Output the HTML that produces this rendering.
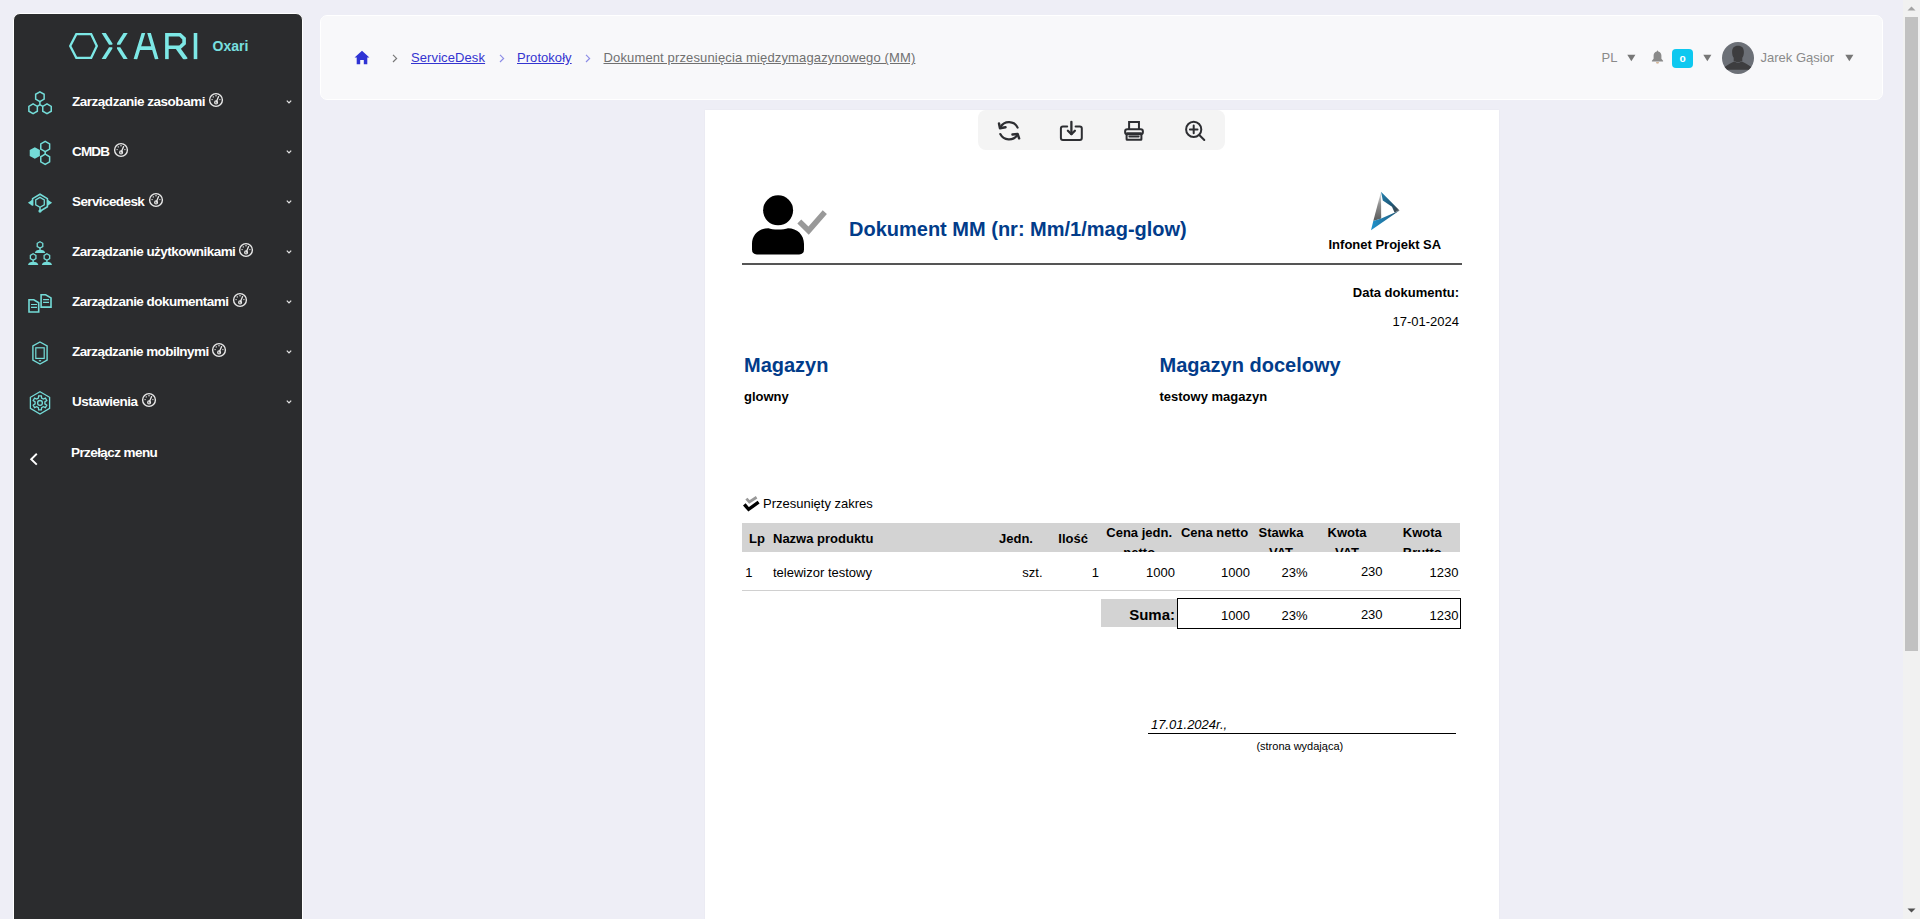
<!DOCTYPE html>
<html><head><meta charset="utf-8">
<style>
*{box-sizing:border-box;margin:0;padding:0}
html,body{width:1920px;height:919px;overflow:hidden}
body{background:#EEEEF6;font-family:"Liberation Sans",sans-serif;position:relative}
.abs{position:absolute}
.t{position:absolute;white-space:nowrap;color:#000}
#sidebar{position:absolute;left:13px;top:13px;width:290px;height:920px;background:#2B2C2E;border:1px solid #fff;border-radius:7px 7px 0 0}
#header{position:absolute;left:320px;top:15px;width:1563px;height:85px;background:#F8F8FA;border:1px solid #fff;border-radius:7px}
.mi{position:absolute;left:72px;color:#fff;font-weight:bold;font-size:13.5px;line-height:13.5px;letter-spacing:-0.55px;white-space:nowrap}
#page{position:absolute;left:705px;top:110px;width:794px;height:820px;background:#fff;box-shadow:0 0 2px rgba(0,0,0,0.04)}
#toolbar{position:absolute;left:978px;top:110px;width:247px;height:40px;background:#F4F4F4;border-radius:8px}
</style></head><body>
<div id="sidebar"></div>
<div id="header"></div>
<div id="page"></div>
<div id="toolbar"></div>

<svg class="abs" style="left:0;top:0" width="320" height="480" viewBox="0 0 320 480">
<g fill="none" stroke="#74DCD8" stroke-width="1.5" stroke-linejoin="miter">
<polygon points="39.90,91.80 44.14,94.25 44.14,99.15 39.90,101.60 35.66,99.15 35.66,94.25"/>
<polygon points="33.10,103.90 37.34,106.35 37.34,111.25 33.10,113.70 28.86,111.25 28.86,106.35"/>
<polygon points="47.00,103.90 51.24,106.35 51.24,111.25 47.00,113.70 42.76,111.25 42.76,106.35"/>
<path d="M39.9,101.6 V104.6 L37.34,106.35 M39.9,104.6 L42.76,106.35"/>
<polygon points="45.20,141.40 49.62,143.95 49.62,149.05 45.20,151.60 40.78,149.05 40.78,143.95"/>
<polygon points="45.20,154.20 49.62,156.75 49.62,161.85 45.20,164.40 40.78,161.85 40.78,156.75"/>
<path d="M45.2,151.6 V154.2"/>
<polygon points="40.00,197.35 44.29,199.83 44.29,204.78 40.00,207.25 35.71,204.78 35.71,199.83" stroke-width="1.3"/>
<path d="M32.6,205.6 V198.6 L40,194.2 L47.4,198.6 V206.8 L40,211.2" stroke-width="1.6"/>
<path d="M40,207.3 V210.5"/>
<polygon points="40.00,241.70 42.77,243.30 42.77,246.50 40.00,248.10 37.23,246.50 37.23,243.30" stroke-width="1.3"/>
<polygon points="33.15,253.80 35.92,255.40 35.92,258.60 33.15,260.20 30.38,258.60 30.38,255.40" stroke-width="1.3"/>
<polygon points="46.90,253.80 49.67,255.40 49.67,258.60 46.90,260.20 44.13,258.60 44.13,255.40" stroke-width="1.3"/>
<path d="M40,248.1 V250 M33.15,260.2 V262 M46.9,260.2 V262" stroke-width="1.3"/>
<path d="M29,312 V299.8 H33.8 L38.7,302.8 V312 Z" stroke-width="1.6"/>
<path d="M31,304.5 H37 M31,307.4 H37" stroke-width="1.2"/>
<path d="M41.1,307.1 V294.8 H45.6 L51,297.9 V307.1 Z" stroke-width="1.6"/>
<path d="M43.1,299.6 H49 M43.1,302.4 H49" stroke-width="1.2"/>
<polygon points="40,342 47.1,346 47.1,360 40,364 32.9,360 32.9,346" stroke-width="1.4"/>
<rect x="35.8" y="347.8" width="8.4" height="10.6" stroke-width="1.2"/>
<polygon points="40.00,391.75 49.61,397.30 49.61,408.40 40.00,413.95 30.39,408.40 30.39,397.30" stroke-width="1.3"/>
<path d="M38.37,398.17 L38.63,395.83 L41.37,395.83 L41.63,398.17 L43.28,399.13 L45.43,398.18 L46.81,400.56 L44.91,401.95 L44.91,403.85 L46.81,405.24 L45.43,407.62 L43.28,406.67 L41.63,407.63 L41.37,409.97 L38.63,409.97 L38.37,407.63 L36.72,406.67 L34.57,407.62 L33.19,405.24 L35.09,403.85 L35.09,401.95 L33.19,400.56 L34.57,398.18 L36.72,399.13 Z" stroke-width="1.3"/>
<circle cx="40" cy="402.9" r="2.4" stroke-width="1.3"/>
</g>
<g fill="#74DCD8">
<polygon points="34.80,147.15 39.87,150.07 39.87,155.93 34.80,158.85 29.73,155.93 29.73,150.07"/>
<path d="M32.6,199.6 L27.9,202.8 L32.6,206 Z M47.4,199.6 L52.1,202.8 L47.4,206 Z"/>
<circle cx="40" cy="211.1" r="1.6"/>
<path d="M34.8,253 Q35.5,249.8 40,249.8 Q44.5,249.8 45.2,253 Z"/>
<path d="M28,265 Q28.7,261.8 33.15,261.8 Q37.6,261.8 38.3,265 Z"/>
<path d="M41.8,265 Q42.5,261.8 46.9,261.8 Q51.3,261.8 52,265 Z"/>
<ellipse cx="40" cy="360.8" rx="1.3" ry="0.7"/>
</g>
<g fill="#7DE8E6">
<polygon points="70.2,46 76.3,34.15 91.2,34.15 96.8,46 91.2,57.85 76.3,57.85" fill="none" stroke="#7DE8E6" stroke-width="2.3"/>
<polygon points="101.6,33 105.8,33 112.3,43.2 112.3,44.7 109.05,44.7"/>
<polygon points="101.6,59 105.8,59 112.3,48.8 112.3,47.3 109.05,47.3"/>
<polygon points="127.7,33 123.5,33 117,43.2 117,44.7 120.25,44.7"/>
<polygon points="127.7,59 123.5,59 117,48.8 117,47.3 120.25,47.3"/>
</g>
<clipPath id="lc"><rect x="60" y="33" width="150" height="26.2"/></clipPath>
<g clip-path="url(#lc)" stroke="#7DE8E6" fill="none" stroke-width="3.5">
<path d="M135.3,59.5 L143.6,32.5 M148.9,32.5 L156.8,59.5"/>
<path d="M138,48.2 H154" stroke-width="3.8"/>
<path d="M166.9,59.5 V34.8 H180 L184.1,38.6 V43.4 L180,47.3 H166.9" stroke-width="3.6"/>
<path d="M177,47 L186,59.5" stroke-width="4.2"/>
<path d="M195.5,33 V59.5" stroke-width="3.6"/>
</g>
</svg>
<div class="t" style="left:212.60px;top:39.15px;font-size:14px;line-height:14px;font-weight:bold;color:#78E0E0">Oxari</div>
<div class="mi" style="top:95.07px;letter-spacing:-0.48px">Zarządzanie zasobami</div>
<svg class="abs" style="left:208.2px;top:92.0px" width="16" height="16" viewBox="0 0 16 16"><circle cx="8" cy="8" r="6.4" fill="none" stroke="#E8E8E8" stroke-width="1.4"/><path d="M8.2,10.3 L10.6,4.6" stroke="#E8E8E8" stroke-width="1.3" stroke-linecap="round"/><circle cx="8.1" cy="10.4" r="1.5" fill="none" stroke="#E8E8E8" stroke-width="1.1"/><circle cx="8" cy="3.7" r="0.75" fill="#E8E8E8"/><circle cx="5.3" cy="4.9" r="0.7" fill="#E8E8E8"/><circle cx="4.1" cy="7.6" r="0.7" fill="#E8E8E8"/><circle cx="11.9" cy="7.6" r="0.7" fill="#E8E8E8"/></svg>
<svg class="abs" style="left:285px;top:99.0px" width="8" height="6" viewBox="0 0 8 6"><path d="M1.8,1.6 L4,3.9 L6.2,1.6" fill="none" stroke="#E0E0E0" stroke-width="1.3"/></svg>
<div class="mi" style="top:145.07px;letter-spacing:-0.85px">CMDB</div>
<svg class="abs" style="left:112.6px;top:142.0px" width="16" height="16" viewBox="0 0 16 16"><circle cx="8" cy="8" r="6.4" fill="none" stroke="#E8E8E8" stroke-width="1.4"/><path d="M8.2,10.3 L10.6,4.6" stroke="#E8E8E8" stroke-width="1.3" stroke-linecap="round"/><circle cx="8.1" cy="10.4" r="1.5" fill="none" stroke="#E8E8E8" stroke-width="1.1"/><circle cx="8" cy="3.7" r="0.75" fill="#E8E8E8"/><circle cx="5.3" cy="4.9" r="0.7" fill="#E8E8E8"/><circle cx="4.1" cy="7.6" r="0.7" fill="#E8E8E8"/><circle cx="11.9" cy="7.6" r="0.7" fill="#E8E8E8"/></svg>
<svg class="abs" style="left:285px;top:149.0px" width="8" height="6" viewBox="0 0 8 6"><path d="M1.8,1.6 L4,3.9 L6.2,1.6" fill="none" stroke="#E0E0E0" stroke-width="1.3"/></svg>
<div class="mi" style="top:195.07px;letter-spacing:-0.6px">Servicedesk</div>
<svg class="abs" style="left:148.2px;top:192.0px" width="16" height="16" viewBox="0 0 16 16"><circle cx="8" cy="8" r="6.4" fill="none" stroke="#E8E8E8" stroke-width="1.4"/><path d="M8.2,10.3 L10.6,4.6" stroke="#E8E8E8" stroke-width="1.3" stroke-linecap="round"/><circle cx="8.1" cy="10.4" r="1.5" fill="none" stroke="#E8E8E8" stroke-width="1.1"/><circle cx="8" cy="3.7" r="0.75" fill="#E8E8E8"/><circle cx="5.3" cy="4.9" r="0.7" fill="#E8E8E8"/><circle cx="4.1" cy="7.6" r="0.7" fill="#E8E8E8"/><circle cx="11.9" cy="7.6" r="0.7" fill="#E8E8E8"/></svg>
<svg class="abs" style="left:285px;top:199.0px" width="8" height="6" viewBox="0 0 8 6"><path d="M1.8,1.6 L4,3.9 L6.2,1.6" fill="none" stroke="#E0E0E0" stroke-width="1.3"/></svg>
<div class="mi" style="top:245.07px;letter-spacing:-0.55px">Zarządzanie użytkownikami</div>
<svg class="abs" style="left:238.0px;top:242.0px" width="16" height="16" viewBox="0 0 16 16"><circle cx="8" cy="8" r="6.4" fill="none" stroke="#E8E8E8" stroke-width="1.4"/><path d="M8.2,10.3 L10.6,4.6" stroke="#E8E8E8" stroke-width="1.3" stroke-linecap="round"/><circle cx="8.1" cy="10.4" r="1.5" fill="none" stroke="#E8E8E8" stroke-width="1.1"/><circle cx="8" cy="3.7" r="0.75" fill="#E8E8E8"/><circle cx="5.3" cy="4.9" r="0.7" fill="#E8E8E8"/><circle cx="4.1" cy="7.6" r="0.7" fill="#E8E8E8"/><circle cx="11.9" cy="7.6" r="0.7" fill="#E8E8E8"/></svg>
<svg class="abs" style="left:285px;top:249.0px" width="8" height="6" viewBox="0 0 8 6"><path d="M1.8,1.6 L4,3.9 L6.2,1.6" fill="none" stroke="#E0E0E0" stroke-width="1.3"/></svg>
<div class="mi" style="top:295.07px;letter-spacing:-0.54px">Zarządzanie dokumentami</div>
<svg class="abs" style="left:231.7px;top:292.0px" width="16" height="16" viewBox="0 0 16 16"><circle cx="8" cy="8" r="6.4" fill="none" stroke="#E8E8E8" stroke-width="1.4"/><path d="M8.2,10.3 L10.6,4.6" stroke="#E8E8E8" stroke-width="1.3" stroke-linecap="round"/><circle cx="8.1" cy="10.4" r="1.5" fill="none" stroke="#E8E8E8" stroke-width="1.1"/><circle cx="8" cy="3.7" r="0.75" fill="#E8E8E8"/><circle cx="5.3" cy="4.9" r="0.7" fill="#E8E8E8"/><circle cx="4.1" cy="7.6" r="0.7" fill="#E8E8E8"/><circle cx="11.9" cy="7.6" r="0.7" fill="#E8E8E8"/></svg>
<svg class="abs" style="left:285px;top:299.0px" width="8" height="6" viewBox="0 0 8 6"><path d="M1.8,1.6 L4,3.9 L6.2,1.6" fill="none" stroke="#E0E0E0" stroke-width="1.3"/></svg>
<div class="mi" style="top:345.07px;letter-spacing:-0.57px">Zarządzanie mobilnymi</div>
<svg class="abs" style="left:211.4px;top:342.0px" width="16" height="16" viewBox="0 0 16 16"><circle cx="8" cy="8" r="6.4" fill="none" stroke="#E8E8E8" stroke-width="1.4"/><path d="M8.2,10.3 L10.6,4.6" stroke="#E8E8E8" stroke-width="1.3" stroke-linecap="round"/><circle cx="8.1" cy="10.4" r="1.5" fill="none" stroke="#E8E8E8" stroke-width="1.1"/><circle cx="8" cy="3.7" r="0.75" fill="#E8E8E8"/><circle cx="5.3" cy="4.9" r="0.7" fill="#E8E8E8"/><circle cx="4.1" cy="7.6" r="0.7" fill="#E8E8E8"/><circle cx="11.9" cy="7.6" r="0.7" fill="#E8E8E8"/></svg>
<svg class="abs" style="left:285px;top:349.0px" width="8" height="6" viewBox="0 0 8 6"><path d="M1.8,1.6 L4,3.9 L6.2,1.6" fill="none" stroke="#E0E0E0" stroke-width="1.3"/></svg>
<div class="mi" style="top:395.07px;letter-spacing:-0.5px">Ustawienia</div>
<svg class="abs" style="left:140.6px;top:392.0px" width="16" height="16" viewBox="0 0 16 16"><circle cx="8" cy="8" r="6.4" fill="none" stroke="#E8E8E8" stroke-width="1.4"/><path d="M8.2,10.3 L10.6,4.6" stroke="#E8E8E8" stroke-width="1.3" stroke-linecap="round"/><circle cx="8.1" cy="10.4" r="1.5" fill="none" stroke="#E8E8E8" stroke-width="1.1"/><circle cx="8" cy="3.7" r="0.75" fill="#E8E8E8"/><circle cx="5.3" cy="4.9" r="0.7" fill="#E8E8E8"/><circle cx="4.1" cy="7.6" r="0.7" fill="#E8E8E8"/><circle cx="11.9" cy="7.6" r="0.7" fill="#E8E8E8"/></svg>
<svg class="abs" style="left:285px;top:399.0px" width="8" height="6" viewBox="0 0 8 6"><path d="M1.8,1.6 L4,3.9 L6.2,1.6" fill="none" stroke="#E0E0E0" stroke-width="1.3"/></svg>
<div class="mi" style="left:71px;top:445.67px;letter-spacing:-0.58px">Przełącz menu</div>
<svg class="abs" style="left:26px;top:450px" width="16" height="18" viewBox="0 0 16 18"><path d="M10.8,3.8 L5.2,9.2 L10.8,14.6" fill="none" stroke="#fff" stroke-width="1.9"/></svg>
<svg class="abs" style="left:354px;top:50px" width="16" height="15" viewBox="0 0 16 15"><path d="M8,0.8 L15.4,7.6 H13.3 V14.2 H9.8 V10 H6.2 V14.2 H2.7 V7.6 H0.6 Z" fill="#2F33D4"/></svg>
<svg class="abs" style="left:392px;top:54px" width="6" height="9" viewBox="0 0 6 9"><path d="M1,0.8 L4.6,4.4 L1,8" fill="none" stroke="#777" stroke-width="1.2"/></svg>
<svg class="abs" style="left:499px;top:54px" width="6" height="9" viewBox="0 0 6 9"><path d="M1,0.8 L4.6,4.4 L1,8" fill="none" stroke="#8C8CE6" stroke-width="1.2"/></svg>
<svg class="abs" style="left:585px;top:54px" width="6" height="9" viewBox="0 0 6 9"><path d="M1,0.8 L4.6,4.4 L1,8" fill="none" stroke="#8C8CE6" stroke-width="1.2"/></svg>
<div class="t" style="left:411.00px;top:51.00px;font-size:13px;line-height:13px;color:#3434D0;text-decoration:underline;letter-spacing:0.1px">ServiceDesk</div>
<div class="t" style="left:517.00px;top:51.00px;font-size:13px;line-height:13px;color:#3434D0;text-decoration:underline;letter-spacing:0.05px">Protokoły</div>
<div class="t" style="left:603.50px;top:51.20px;font-size:13px;line-height:13px;color:#707070;text-decoration:underline;letter-spacing:0.14px">Dokument przesunięcia międzymagazynowego (MM)</div>
<div class="t" style="left:1601.50px;top:51.30px;font-size:13px;line-height:13px;color:#8A8A8A">PL</div>
<svg class="abs" style="left:1627px;top:54px" width="9" height="8" viewBox="0 0 9 8"><path d="M0.3,0.8 H8.4 L4.35,7.2 Z" fill="#777"/></svg>
<svg class="abs" style="left:1703px;top:54px" width="9" height="8" viewBox="0 0 9 8"><path d="M0.3,0.8 H8.4 L4.35,7.2 Z" fill="#777"/></svg>
<svg class="abs" style="left:1845px;top:54px" width="9" height="8" viewBox="0 0 9 8"><path d="M0.3,0.8 H8.4 L4.35,7.2 Z" fill="#777"/></svg>
<svg class="abs" style="left:1651px;top:50px" width="13" height="14" viewBox="0 0 13 14"><path d="M6.5,0.6 C6.9,0.6 7.2,0.9 7.2,1.4 C9.3,1.8 10.4,3.5 10.4,5.6 V8.8 L12.1,10.8 V11.4 H0.9 V10.8 L2.6,8.8 V5.6 C2.6,3.5 3.7,1.8 5.8,1.4 C5.8,0.9 6.1,0.6 6.5,0.6 Z" fill="#8A8A8A"/><path d="M5,12.2 H8 C8,13 7.3,13.6 6.5,13.6 C5.7,13.6 5,13 5,12.2 Z" fill="#C9A27A"/></svg>
<div class="abs" style="left:1672px;top:49px;width:21px;height:19px;background:#0DC8F0;border-radius:4px"></div>
<div class="t" style="left:1482.60px;width:400px;text-align:center;top:54.06px;font-size:9.5px;line-height:9.5px;font-weight:bold;color:#fff"><span style="display:inline-block;transform:scaleX(1.18)">0</span></div>
<svg class="abs" style="left:1722px;top:42px" width="32" height="32" viewBox="0 0 32 32"><defs><clipPath id="av"><circle cx="16" cy="16" r="16"/></clipPath></defs><circle cx="16" cy="16" r="16" fill="#6C7077"/><g clip-path="url(#av)" fill="#3D3D3F"><path d="M16,3.8 C19.9,3.8 21.9,5.9 21.9,9.9 C21.9,12.6 21.3,14.3 20.3,15.7 V19 L16,20.6 L11.7,19 V15.7 C10.7,14.3 10.1,12.6 10.1,9.9 C10.1,5.9 12.1,3.8 16,3.8 Z"/><path d="M0,27.7 L2.6,24.9 C5.8,22.6 8.8,21.1 12,19.4 L16,20.9 L20,19.4 C23.2,21.1 26.2,22.6 29.4,24.9 L32,27.7 Z"/></g></svg>
<div class="t" style="left:1760.50px;top:51.30px;font-size:13px;line-height:13px;color:#8A8A8A">Jarek Gąsior</div>
<svg class="abs" style="left:1903px;top:0" width="17" height="919" viewBox="0 0 17 919"><rect width="17" height="919" fill="#F1F1F1"/><path d="M4.5,10.5 L8.5,6.5 L12.5,10.5 Z" fill="#A3A3A3"/><rect x="2" y="17" width="13" height="634" fill="#C1C1C1"/><path d="M4.5,908.5 L8.5,912.5 L12.5,908.5 Z" fill="#505050"/></svg>
<svg class="abs" style="left:978px;top:110px" width="247" height="40" viewBox="0 0 247 40"><g fill="none" stroke="#2D2E32" stroke-width="2" stroke-linecap="round" stroke-linejoin="round">
<path d="M39.6,17.6 A9.5,9.5 0 0 0 22.6,17" stroke-width="2.2"/><path d="M21,13.4 L22,18.2 L27.5,17.2" stroke-width="2.5"/>
<path d="M22.3,24.1 A9.9,9.9 0 0 0 39.2,25.2" stroke-width="2.2"/><path d="M34.5,24.6 L39.6,23.9 L41.1,28.3" stroke-width="2.5"/>
<path d="M97.6,16.6 H101.8 A2,2 0 0 1 103.8,18.6 V27.9 A2,2 0 0 1 101.8,29.9 H84.9 A2,2 0 0 1 82.9,27.9 V18.6 A2,2 0 0 1 84.9,16.6 H89.2"/>
<path d="M93.4,11.8 V24" stroke-width="2.3"/><path d="M89.9,20.7 L93.4,24.1 L96.9,20.7" stroke-width="2.3"/>
<path d="M151.1,19.3 V12.1 H160.95 V19.3" stroke-linejoin="miter" stroke-linecap="butt"/>
<rect x="147.1" y="19.2" width="17.8" height="5" rx="2.2"/>
<rect x="148.6" y="23.2" width="14.8" height="6.6" rx="0.5" stroke-linejoin="miter"/>
<path d="M151.4,26.5 H160.6"/>
<circle cx="215.7" cy="19.4" r="7.6"/><path d="M221.3,25 L226.3,30"/><path d="M215.7,15.6 V23.2 M211.9,19.4 H219.5"/>
</g></svg>
<svg class="abs" style="left:745px;top:190px" width="90" height="70" viewBox="745 190 90 70">
<circle cx="778.1" cy="210.3" r="15" fill="#000"/>
<path d="M752,249.6 V244 C752,234.5 759,228.2 768.5,228.2 C772,230 784,230 788,228.2 C797,228.2 804,234.5 804,244 V249.6 Q804,254.4 799.2,254.4 H756.8 Q752,254.4 752,249.6 Z" fill="#000"/>
<path d="M799.3,221.6 L808.6,230.6 L824.8,212.2" fill="none" stroke="#999" stroke-width="5.6"/>
</svg>
<div class="t" style="left:849.00px;top:219.07px;font-size:20px;line-height:20px;font-weight:bold;color:#023C8A">Dokument MM (nr: Mm/1/mag-glow)</div>
<svg class="abs" style="left:1365px;top:188px" width="40" height="46" viewBox="1365 188 40 46">
<defs><linearGradient id="g1" x1="0" y1="0" x2="0" y2="1"><stop offset="0" stop-color="#E6E6E6"/><stop offset="0.45" stop-color="#8E8E8E"/><stop offset="1" stop-color="#5A5A5A"/></linearGradient>
<linearGradient id="g2" x1="0" y1="0" x2="1" y2="0"><stop offset="0" stop-color="#1E92CC"/><stop offset="0.6" stop-color="#22709A"/><stop offset="1" stop-color="#1F4E66"/></linearGradient>
<linearGradient id="g3" x1="0" y1="0" x2="1" y2="1"><stop offset="0" stop-color="#2383B2"/><stop offset="0.6" stop-color="#1F5675"/><stop offset="0.85" stop-color="#3A4A55"/><stop offset="1" stop-color="#9A9A9A"/></linearGradient></defs>
<polygon points="1381,191.75 1381.2,218.4 1373.3,220.9" fill="url(#g1)"/>
<polygon points="1373.3,220.9 1381.2,218.4 1399.5,210.5 1371,230.3" fill="url(#g2)"/>
<polygon points="1381,191.75 1399.6,210.4 1394.5,212.6 1392,206.8 1382.8,200.5" fill="url(#g3)"/>
</svg>
<div class="t" style="left:1328.50px;top:237.80px;font-size:13px;line-height:13px;font-weight:bold">Infonet Projekt SA</div>
<div class="abs" style="left:742px;top:263px;width:720px;height:2px;background:#555"></div>
<div class="t" style="left:1059.00px;width:400px;text-align:right;top:285.80px;font-size:13px;line-height:13px;font-weight:bold">Data dokumentu:</div>
<div class="t" style="left:1059.00px;width:400px;text-align:right;top:315.00px;font-size:13px;line-height:13px;">17-01-2024</div>
<div class="t" style="left:744.00px;top:355.07px;font-size:20px;line-height:20px;font-weight:bold;color:#023C8A">Magazyn</div>
<div class="t" style="left:744.00px;top:389.50px;font-size:13px;line-height:13px;font-weight:bold">glowny</div>
<div class="t" style="left:1159.50px;top:355.07px;font-size:20px;line-height:20px;font-weight:bold;color:#023C8A">Magazyn docelowy</div>
<div class="t" style="left:1159.50px;top:389.70px;font-size:13px;line-height:13px;font-weight:bold">testowy magazyn</div>
<svg class="abs" style="left:740px;top:494px" width="22" height="20" viewBox="740 494 22 20">
<path d="M746.4,498.6 L749.4,501.9 L756.6,497.3" fill="none" stroke="#999" stroke-width="2.8"/>
<path d="M744.3,504.3 L748.6,509.3 L758.6,502.1" fill="none" stroke="#000" stroke-width="3.4"/>
</svg>
<div class="t" style="left:763.00px;top:497.00px;font-size:13px;line-height:13px;">Przesunięty zakres</div>
<div class="abs" style="left:742px;top:523px;width:718px;height:29px;background:#D3D3D3;overflow:hidden"><div class="t" style="left:7.00px;top:8.60px;font-size:13px;line-height:13px;font-weight:bold">Lp</div><div class="t" style="left:31.00px;top:8.60px;font-size:13px;line-height:13px;font-weight:bold">Nazwa produktu</div><div class="t" style="left:257.00px;top:8.70px;font-size:13px;line-height:13px;font-weight:bold">Jedn.</div><div class="t" style="left:316.30px;top:8.70px;font-size:13px;line-height:13px;font-weight:bold">Ilość</div><div class="t" style="left:197.20px;width:400px;text-align:center;top:2.90px;font-size:13px;line-height:13px;font-weight:bold">Cena jedn.</div><div class="t" style="left:197.20px;width:400px;text-align:center;top:23.30px;font-size:13px;line-height:13px;font-weight:bold">netto</div><div class="t" style="left:272.50px;width:400px;text-align:center;top:2.90px;font-size:13px;line-height:13px;font-weight:bold">Cena netto</div><div class="t" style="left:339.00px;width:400px;text-align:center;top:2.90px;font-size:13px;line-height:13px;font-weight:bold">Stawka</div><div class="t" style="left:339.00px;width:400px;text-align:center;top:23.30px;font-size:13px;line-height:13px;font-weight:bold">VAT</div><div class="t" style="left:405.00px;width:400px;text-align:center;top:2.90px;font-size:13px;line-height:13px;font-weight:bold">Kwota</div><div class="t" style="left:405.00px;width:400px;text-align:center;top:23.30px;font-size:13px;line-height:13px;font-weight:bold">VAT</div><div class="t" style="left:480.30px;width:400px;text-align:center;top:2.90px;font-size:13px;line-height:13px;font-weight:bold">Kwota</div><div class="t" style="left:480.30px;width:400px;text-align:center;top:23.30px;font-size:13px;line-height:13px;font-weight:bold">Brutto</div></div>
<div class="t" style="left:745.20px;top:565.50px;font-size:13px;line-height:13px;">1</div>
<div class="t" style="left:773.00px;top:565.50px;font-size:13px;line-height:13px;">telewizor testowy</div>
<div class="t" style="left:642.50px;width:400px;text-align:right;top:565.50px;font-size:13px;line-height:13px;">szt.</div>
<div class="t" style="left:699.00px;width:400px;text-align:right;top:565.50px;font-size:13px;line-height:13px;">1</div>
<div class="t" style="left:775.00px;width:400px;text-align:right;top:565.50px;font-size:13px;line-height:13px;">1000</div>
<div class="t" style="left:850.00px;width:400px;text-align:right;top:565.50px;font-size:13px;line-height:13px;">1000</div>
<div class="t" style="left:907.50px;width:400px;text-align:right;top:565.50px;font-size:13px;line-height:13px;">23%</div>
<div class="t" style="left:982.60px;width:400px;text-align:right;top:564.50px;font-size:13px;line-height:13px;">230</div>
<div class="t" style="left:1058.40px;width:400px;text-align:right;top:565.50px;font-size:13px;line-height:13px;">1230</div>
<div class="abs" style="left:742px;top:590px;width:718px;height:1px;background:#D0D0D0"></div>
<div class="abs" style="left:1101px;top:599px;width:76px;height:28px;background:#D3D3D3"></div>
<div class="abs" style="left:1177px;top:598px;width:284px;height:31px;border:1px solid #000"></div>
<div class="t" style="left:775.00px;width:400px;text-align:right;top:607.10px;font-size:15px;line-height:15px;font-weight:bold">Suma:</div>
<div class="t" style="left:850.00px;width:400px;text-align:right;top:608.80px;font-size:13px;line-height:13px;">1000</div>
<div class="t" style="left:907.50px;width:400px;text-align:right;top:608.80px;font-size:13px;line-height:13px;">23%</div>
<div class="t" style="left:982.60px;width:400px;text-align:right;top:607.50px;font-size:13px;line-height:13px;">230</div>
<div class="t" style="left:1058.40px;width:400px;text-align:right;top:608.80px;font-size:13px;line-height:13px;">1230</div>
<div class="t" style="left:1151.00px;top:717.80px;font-size:13px;line-height:13px;font-style:italic">17.01.2024r.,</div>
<div class="abs" style="left:1148px;top:733px;width:308px;height:1.3px;background:#000"></div>
<div class="t" style="left:1099.80px;width:400px;text-align:center;top:741.19px;font-size:11px;line-height:11px;">(strona wydająca)</div>
</body></html>
